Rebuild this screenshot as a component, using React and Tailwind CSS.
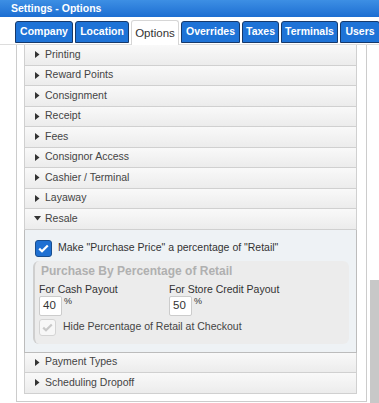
import React from 'react';

const tabs = [
  { label: 'Company', w: 'w-[58px]' },
  { label: 'Location', w: 'w-[54px]' },
  { label: 'Options', w: 'w-[48px]', active: true },
  { label: 'Overrides', w: 'w-[59px]' },
  { label: 'Taxes', w: 'w-[37px]' },
  { label: 'Terminals', w: 'w-[57px]' },
  { label: 'Users', w: 'w-[40px]' },
];

const before = [
  'Printing',
  'Reward Points',
  'Consignment',
  'Receipt',
  'Fees',
  'Consignor Access',
  'Cashier / Terminal',
  'Layaway',
];

const after = ['Payment Types', 'Scheduling Dropoff'];

const Arrow = ({ open }) =>
  open ? (
    <svg width="7" height="5" viewBox="0 0 7 5" className="mr-[4px]">
      <path d="M0 0 L7 0 L3.5 4.5 Z" fill="#333" />
    </svg>
  ) : (
    <svg width="5" height="7" viewBox="0 0 5 7" className="mr-[5px] ml-[1px]">
      <path d="M0 0 L4.5 3.5 L0 7 Z" fill="#333" />
    </svg>
  );

const Header = ({ label, open }) => (
  <div className="flex items-center h-[19.5px] box-content pl-[9px] border-x border-b border-[#d0d0d0] bg-gradient-to-b from-[#f9f9f9] to-[#ececec] text-[10.5px] text-[#444]">
    <Arrow open={open} />
    <span>{label}</span>
  </div>
);

const Check = () => (
  <div className="w-[17px] h-[17px] flex items-center justify-center rounded-[3px] bg-[#1f70d2] border border-[#184d8e] shrink-0">
    <svg width="11" height="9" viewBox="0 0 11 9">
      <path d="M1.2 4.6 L4 7.3 L9.8 1.5" stroke="white" strokeWidth="2.2" fill="none" />
    </svg>
  </div>
);

const Payout = ({ label, value }) => (
  <div>
    <div className="text-[10.5px] leading-[12px] text-[#333]">{label}</div>
    <div className="flex items-start mt-[1px]">
      <div className="w-[23px] h-[20px] bg-white border border-[#cccccc] rounded-[2px] text-[11.5px] text-[#333] pl-[3px] flex items-center">
        {value}
      </div>
      <span className="ml-[2px] text-[9px] leading-none text-[#333] mt-[1px]">%</span>
    </div>
  </div>
);

export default function App() {
  return (
    <div className="w-[379px] h-[403px] overflow-hidden bg-white font-['Liberation_Sans',Arial,sans-serif]">
      {/* Title bar */}
      <div className="h-[17px] bg-gradient-to-b from-[#3d8fe4] to-[#1c6ed2] flex items-center pl-[11px]">
        <span className="text-white font-bold text-[10.5px] leading-none">Settings - Options</span>
      </div>

      {/* Tabs */}
      <div className="h-[28px] flex items-end pl-[15px] gap-[2px] border-b border-[#dddddd]">
        {tabs.map((t) =>
          t.active ? (
            <div
              key={t.label}
              className={`${t.w} h-[25px] -mb-px shrink-0 flex items-center justify-center bg-white border border-b-0 border-[#d6d6d6] rounded-t-[3px] text-[11.5px] text-[#333] pt-[2px]`}
            >
              {t.label}
            </div>
          ) : (
            <div
              key={t.label}
              className={`${t.w} h-[22px] mb-px shrink-0 flex items-center justify-center bg-[#1e73d7] border border-[#17396a] rounded-t-[3px] text-[10.5px] font-bold text-white`}
            >
              {t.label}
            </div>
          )
        )}
      </div>

      {/* Body */}
      <div className="flex">
        <div className="ml-[16px] w-[351px] h-[357px] border-x border-b border-[#cccccc] pl-[7px] shrink-0">
          <div className="w-[333px]">
            {before.map((l) => (
              <Header key={l} label={l} />
            ))}
            <Header label="Resale" open />

            {/* Resale panel */}
            <div className="bg-[#eef2f5] border-x border-b border-[#bcbcbc] pl-[8px] pr-[7px] pt-[10px] pb-[8px]">
              <div className="flex items-center ml-[2px]">
                <Check />
                <span className="ml-[6px] text-[10.5px] text-[#333]">
                  Make "Purchase Price" a percentage of "Retail"
                </span>
              </div>

              <div className="mt-[4px] h-[83px] bg-[#ececec] rounded-[6px] border-l-2 border-[#cfcfcf] pl-[4px] pt-[3px]">
                <div className="ml-[2px] text-[12px] leading-[14px] font-bold text-[#b0b0b0]">
                  Purchase By Percentage of Retail
                </div>
                <div className="flex mt-[5px]">
                  <div className="w-[130px]">
                    <Payout label="For Cash Payout" value="40" />
                  </div>
                  <Payout label="For Store Credit Payout" value="50" />
                </div>
                <div className="flex items-center mt-[3px]">
                  <div className="w-[17px] h-[17px] flex items-center justify-center rounded-[3px] bg-[#f7f7f7] border border-[#d4d4d4] shrink-0">
                    <svg width="11" height="9" viewBox="0 0 11 9">
                      <path d="M1.2 4.6 L4 7.3 L9.8 1.5" stroke="#c9c9c9" strokeWidth="2.2" fill="none" />
                    </svg>
                  </div>
                  <span className="ml-[7px] text-[10.5px] text-[#444]">Hide Percentage of Retail at Checkout</span>
                </div>
              </div>
            </div>

            {after.map((l) => (
              <Header key={l} label={l} />
            ))}
          </div>
        </div>

        {/* Scrollbar */}
        <div className="ml-[3px] w-[9px] mt-[235px] h-[200px] bg-[#c8c8c8] shrink-0" />
      </div>
    </div>
  );
}
